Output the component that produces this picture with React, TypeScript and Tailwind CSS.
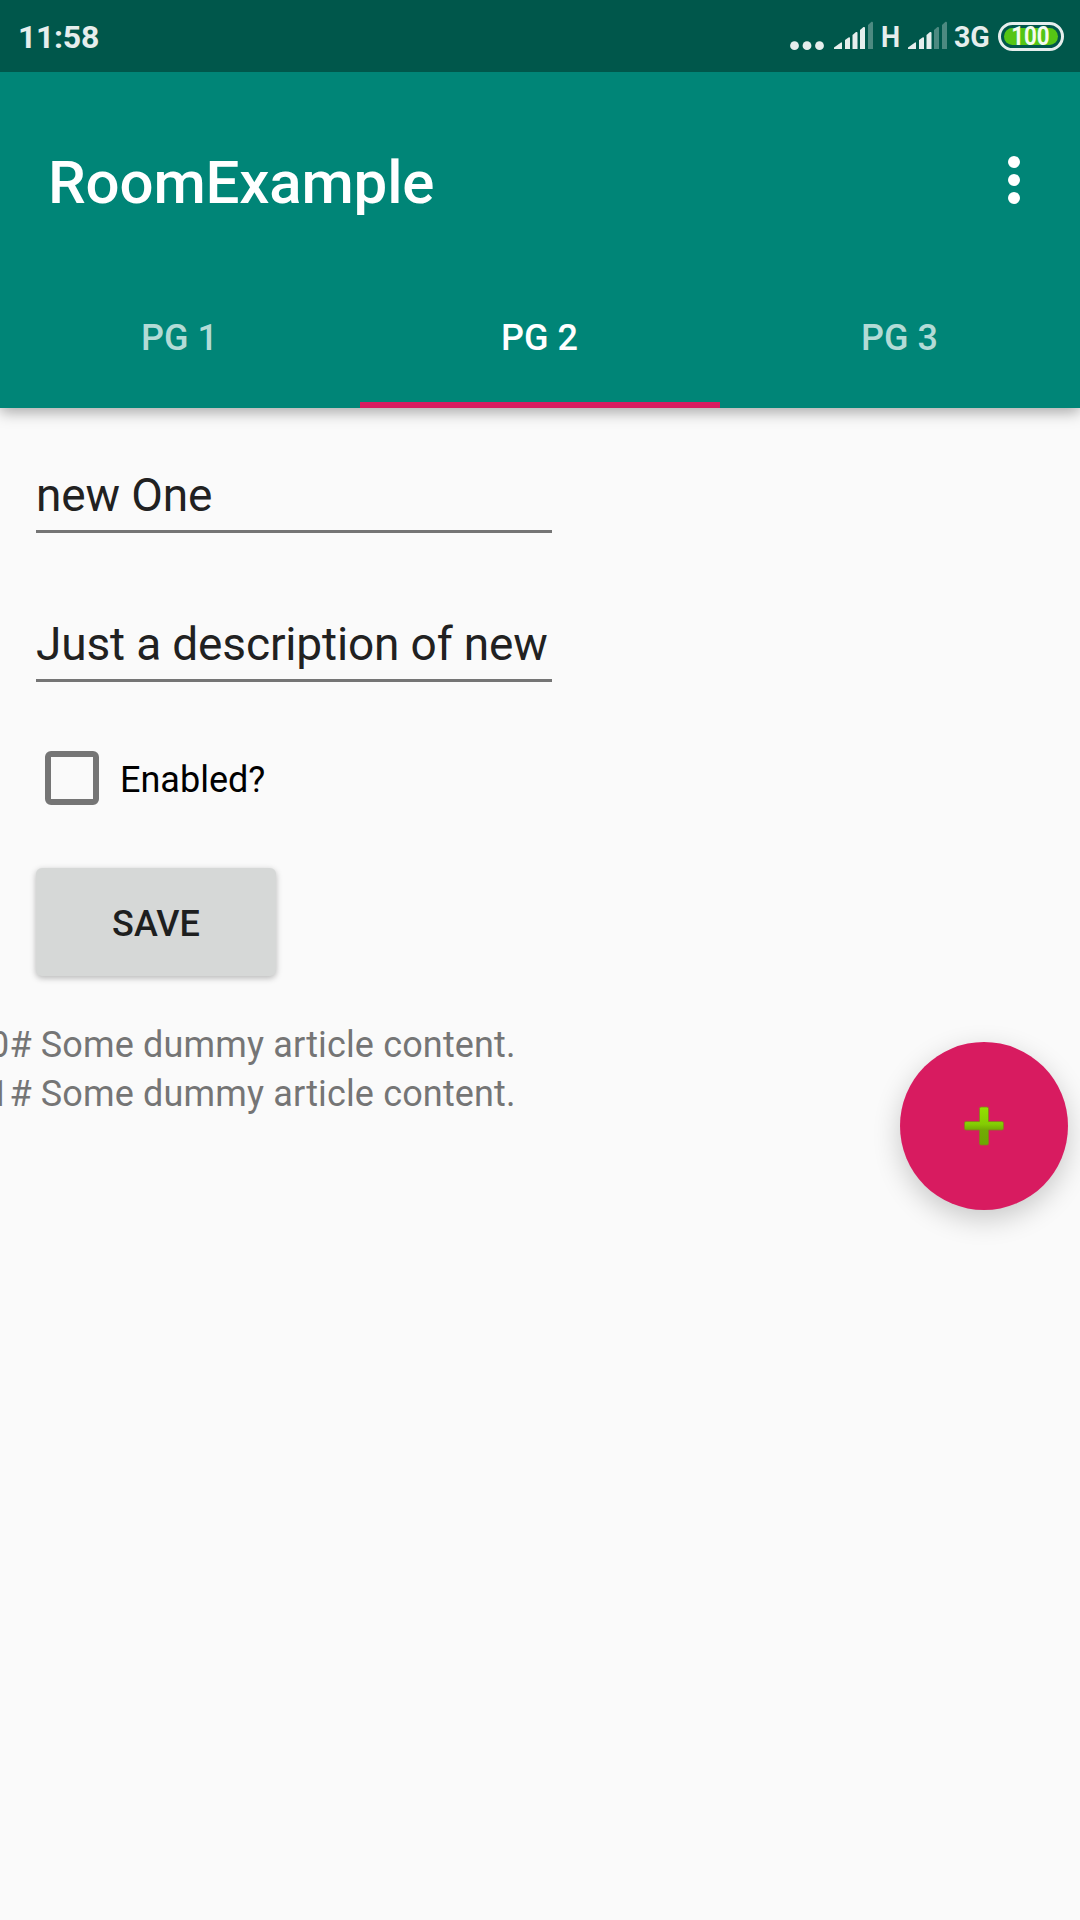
import type { ReactNode } from "react";

function Signal({ active, className }: { active: number; className?: string }) {
  const bars = [
    "M0 28 L0 26.5 L7 21.5 Q8 21 8 22 V28 Z",
    "M11 28 V19 L14.5 16.5 Q16 16 16 17 V28 Z",
    "M18.5 28 V14 L22 11 Q23.5 10.5 23.5 12 V28 Z",
    "M26 28 V9 L29.5 6 Q31 5.5 31 7 V28 Z",
    "M34 28 V4 L37.5 0.8 Q39 0.3 39 2 V28 Z",
  ];
  return (
    <svg width="39" height="28" viewBox="0 0 39 28" className={className}>
      {bars.map((d, i) => (
        <path key={d} d={d} fill={i < active ? "#e6eeed" : "#4d8a81"} />
      ))}
    </svg>
  );
}

function StatusBar() {
  return (
    <div className="flex h-[72px] items-start bg-[#00574b] pl-[18px] text-[32px] leading-[40px] font-bold text-[#e6eeed]">
      <span className="mt-[17px] tracking-[-0.3px]">11:58</span>
      <div className="ml-auto flex items-start pr-[16px]">
        <svg width="34" height="10" viewBox="0 0 34 10" className="mt-[41px]" fill="#e6eeed">
          <circle cx="4.5" cy="4.7" r="4.4" />
          <circle cx="17" cy="4.7" r="4.4" />
          <circle cx="29.5" cy="4.7" r="4.4" />
        </svg>
        <Signal active={4} className="mt-[21px] ml-[10px]" />
        <span className="mt-[17px] flex w-[35px] justify-center text-[30px]">
          <span className="scale-x-90">H</span>
        </span>
        <Signal active={3} className="mt-[21px]" />
        <span className="mt-[17px] ml-[7px] w-[39px] text-[30px]">
          <span className="inline-block origin-left scale-x-95">3G</span>
        </span>
        <div className="mt-[22px] ml-[5px] h-[29px] w-[66px] rounded-full border-[3px] border-[#e6eeed] p-[3px]">
          <div className="flex h-[17px] items-center justify-center rounded-full bg-[#55c514] text-[26px] leading-[17px] text-[#f4fbf0]">
            <span className="relative right-px scale-x-[0.86]">100</span>
          </div>
        </div>
      </div>
    </div>
  );
}

function Tab({ children, active = false }: { children: ReactNode; active?: boolean }) {
  return (
    <button
      className={
        active
          ? "flex h-[144px] flex-1 items-center justify-center border-b-[6px] border-[#d81b60] pt-[10px] text-[36px] leading-[44px] font-medium text-white"
          : "flex h-[144px] flex-1 items-center justify-center border-b-[6px] border-transparent pt-[10px] text-[36px] leading-[44px] font-medium text-[#b3dbd6]"
      }
    >
      <span className="-ml-px">{children}</span>
    </button>
  );
}

function Field({ value }: { value: string }) {
  return (
    <div className="h-[68px] w-[516px] border-b-[3px] border-[#757575] text-[46px] leading-[60px] tracking-[-0.15px] whitespace-nowrap text-[#212121]">
      {value}
    </div>
  );
}

export default function App() {
  return (
    <div className="relative h-[1920px] w-[1080px] overflow-hidden bg-[#fafafa] font-['Roboto',sans-serif]">
      <header className="relative h-[408px] bg-[#008577] shadow-[0_4px_14px_rgba(0,0,0,0.34)]">
        <StatusBar />
        <div className="mt-[24px] flex h-[168px] items-center justify-between pr-[60px] pl-[48px]">
          <h1 className="pt-[5px] text-[60px] leading-[72px] font-medium tracking-[-0.15px] text-white">RoomExample</h1>
          <svg width="12" height="48" viewBox="0 0 12 48" fill="#fff">
            <circle cx="6" cy="6" r="6" />
            <circle cx="6" cy="24" r="6" />
            <circle cx="6" cy="42" r="6" />
          </svg>
        </div>
        <nav className="flex">
          <Tab>PG 1</Tab>
          <Tab active>PG 2</Tab>
          <Tab>PG 3</Tab>
        </nav>
      </header>

      <main className="flex flex-col items-start pt-[57px] pl-[36px]">
        <Field value="new One" />
        <div className="mt-[81px]">
          <Field value="Just a description of new" />
        </div>
        <label className="mt-[69px] ml-[9px] flex h-[54px] items-center">
          <span className="h-[54px] w-[54px] rounded-[6px] border-[6px] border-[#757575]" />
          <span className="ml-[21px] pt-[3px] text-[36px] leading-[44px] text-black">Enabled?</span>
        </label>
        <button className="mt-[63px] flex h-[108px] w-[240px] items-center justify-center rounded-[6px] bg-[#d6d8d7] pt-[3px] text-[36px] leading-[44px] font-medium text-[#1e1f1f] shadow-[0_2px_6px_rgba(0,0,0,0.28)]">
          SAVE
        </button>
        <div className="mt-[45px] -ml-[47px] text-[36px] leading-[49px] tracking-[0.15px] whitespace-nowrap text-[#757575]">
          <p>0# Some dummy article content.</p>
          <p>1# Some dummy article content.</p>
        </div>
      </main>

      <button className="absolute top-[1042px] left-[900px] flex h-[168px] w-[168px] items-center justify-center rounded-full bg-[#d81b60] shadow-[0_9px_28px_rgba(0,0,0,0.2)]">
        <svg width="40" height="40" viewBox="0 0 40 40">
          <defs>
            <linearGradient id="plus" x1="0" y1="0" x2="0" y2="1">
              <stop offset="0" stopColor="#94e000" />
              <stop offset="0.45" stopColor="#84cd03" />
              <stop offset="0.6" stopColor="#72ab05" />
              <stop offset="1" stopColor="#6aa800" />
            </linearGradient>
          </defs>
          <path
            d="M17 1H23Q24.500 1 24.500 2.500V15.500H38Q39.500 15.500 39.500 17V22.500Q39.500 24 38 24H24.500V37.500Q24.500 39 23 39H17Q15.500 39 15.500 37.500V24H2Q.5 24 .5 22.500V17Q.5 15.500 2 15.500H15.500V2.500Q15.500 1 17 1Z"
            fill="url(#plus)"
            stroke="#8a7a1e"
            strokeWidth="0.800"
          />
        </svg>
      </button>
    </div>
  );
}
